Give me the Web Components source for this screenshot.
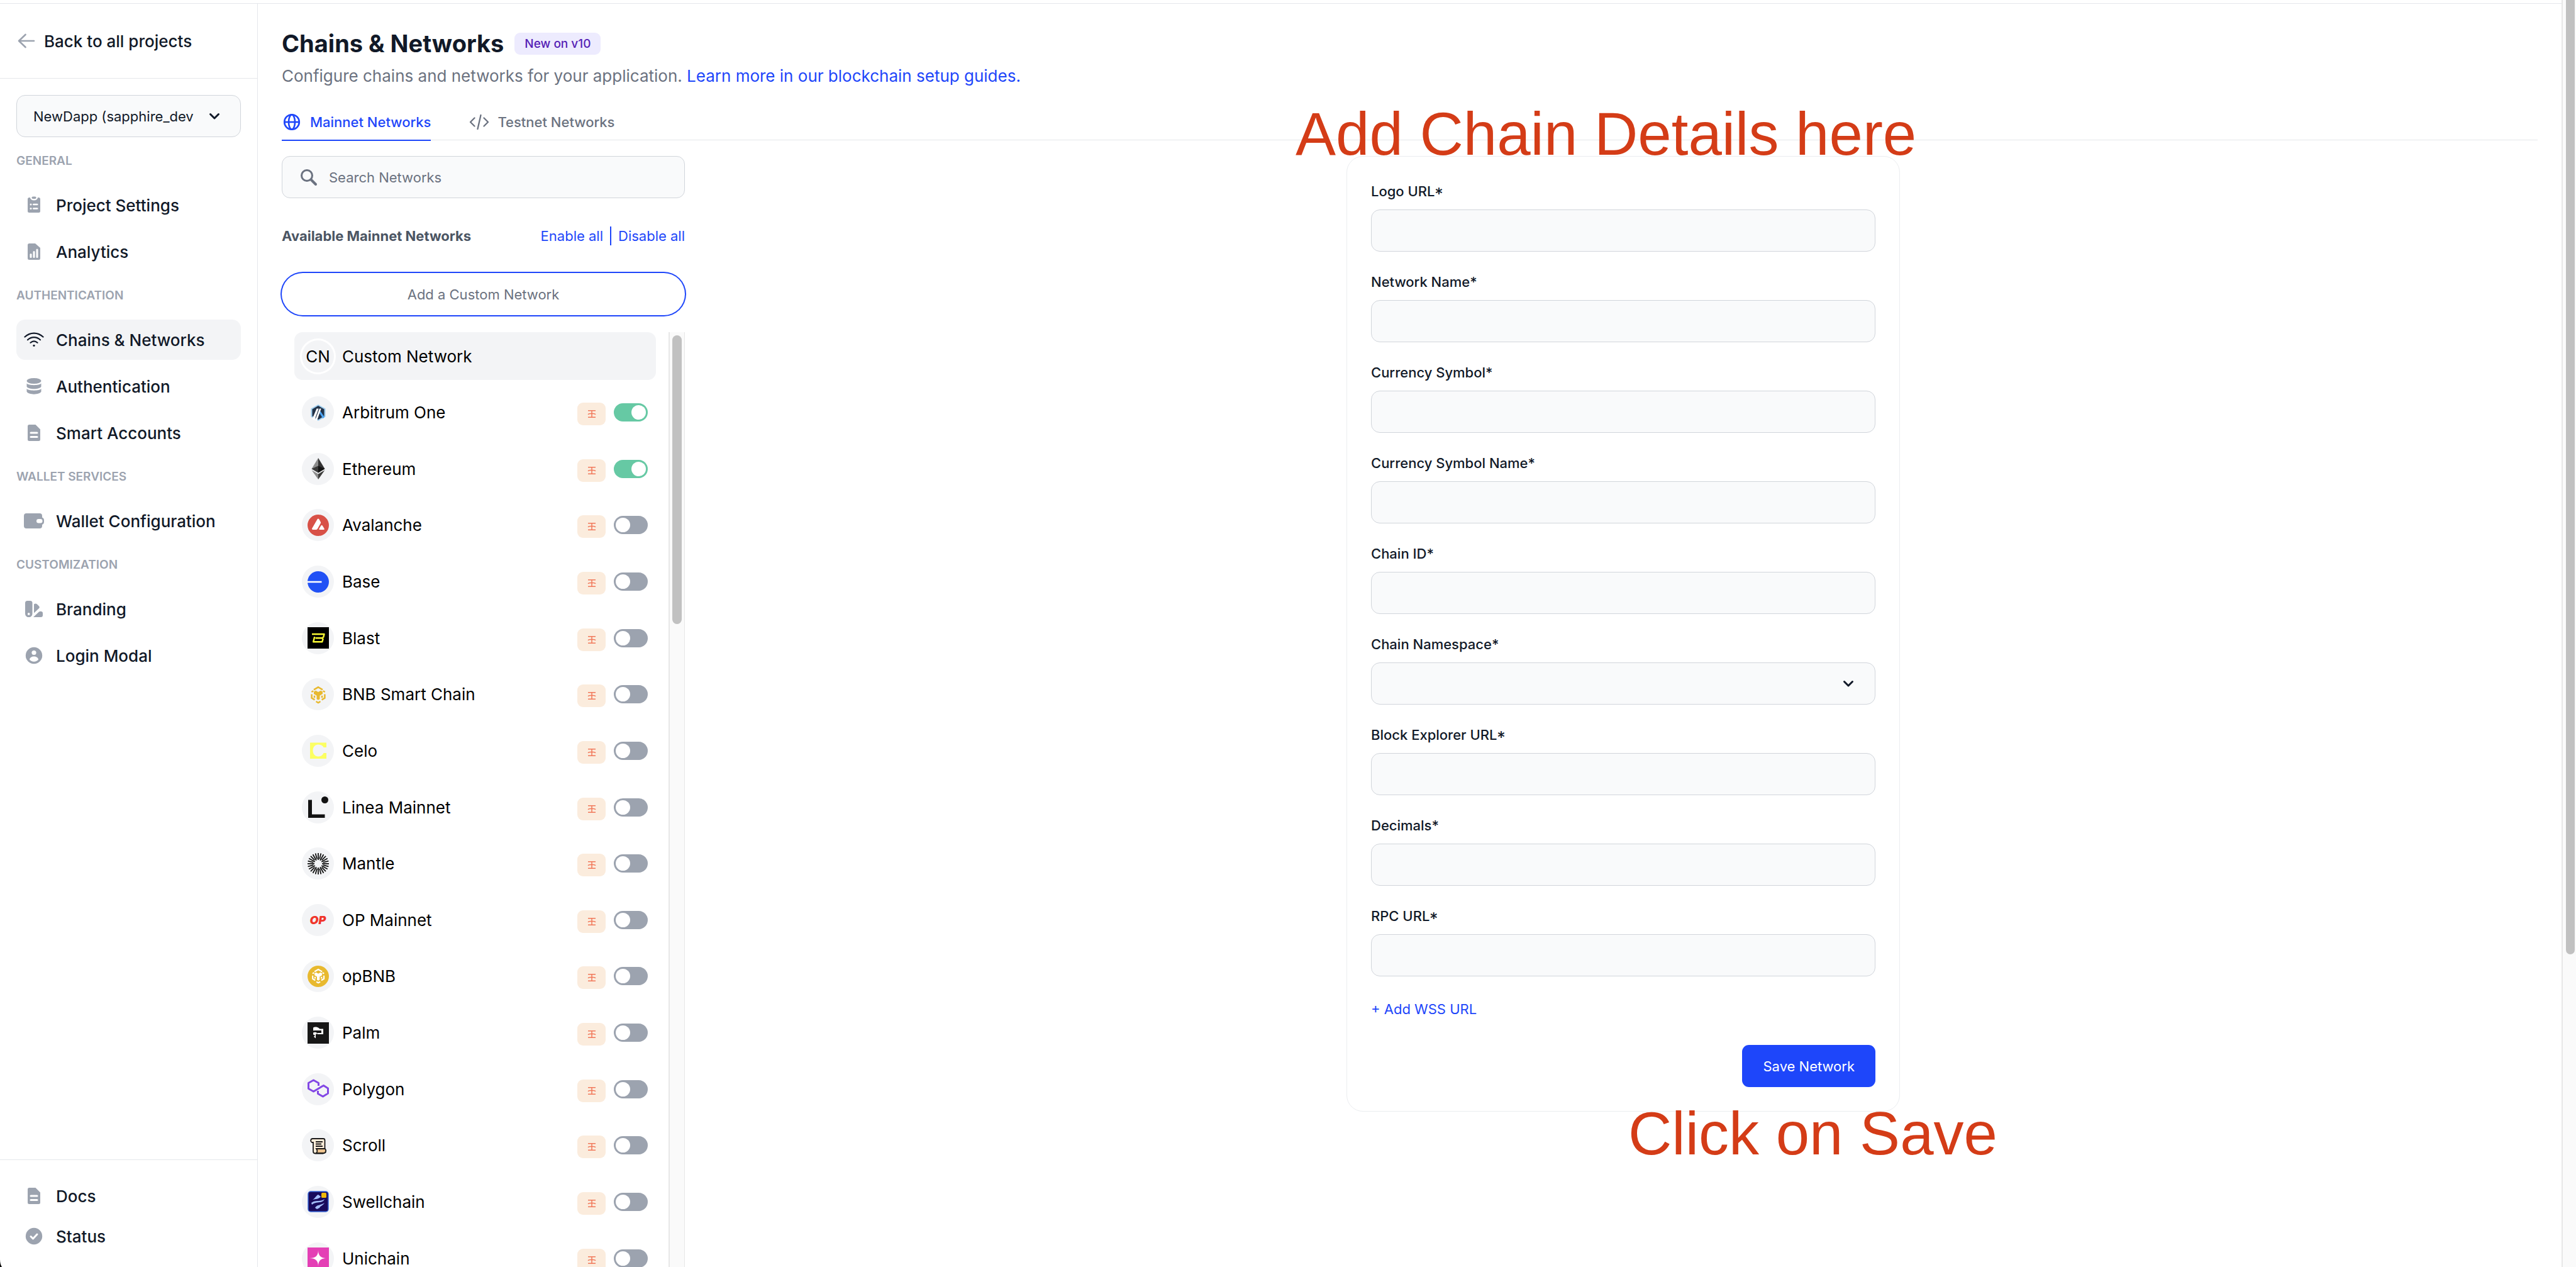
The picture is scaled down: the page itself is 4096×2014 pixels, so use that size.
<!DOCTYPE html>
<html lang="en">
<head>
<meta charset="utf-8">
<title>Chains &amp; Networks</title>
<style>
  :root {
    --ink: #111928; --muted: #6b7280; --soft: #9ca3af; --line: #e5e7eb; --edge: #d1d5db;
    --field: #f9fafb; --blue: #1e46fa; --note: #d43c17;
    --fs-lg: 26px; --fs-md: 22px; --fs-sm: 19px;
  }
  html, body { height: 100%; }
  body { margin: 0; background: #fff; color: var(--ink); font-family: Inter, "Liberation Sans", sans-serif; font-size: var(--fs-lg); }
</style>
</head>
<body>
<app-shell></app-shell>
<script>
const ICONS = {
  back: `<svg width="28" height="28" viewBox="0 0 28 28" fill="none" stroke="#9ca3af" stroke-width="2.6" stroke-linecap="round" stroke-linejoin="round"><path d="M26 14H2M12.500 4L2 14l10.500 10"/></svg>`,
  chevron: `<svg width="18" height="12" viewBox="0 0 18 12" fill="none" stroke="#111928" stroke-width="3" stroke-linecap="round" stroke-linejoin="round"><path d="M2.500 2.500L9 9l6.500-6.500"/></svg>`,
  clipboard: `<svg width="20" height="28" viewBox="0 0 20 28"><path fill="currentColor" d="M2.500 2H4a6 4.500 0 0 0 12 0h1.500A2.500 2.500 0 0 1 20 4.500v19a2.500 2.500 0 0 1-2.500 2.500h-15A2.500 2.500 0 0 1 0 23.500v-19A2.500 2.500 0 0 1 2.500 2z"/><rect x="6.500" y="0.500" width="7" height="3.500" rx="1.700" fill="currentColor"/><g fill="#fff"><circle cx="5" cy="13" r="1.500"/><circle cx="5" cy="19.500" r="1.500"/><rect x="8" y="11.700" width="8.500" height="2.600" rx="1.300"/><rect x="8" y="18.200" width="8.500" height="2.600" rx="1.300"/></g></svg>`,
  chart: `<svg width="20" height="26" viewBox="0 0 20 26"><path fill="currentColor" d="M2.500 0h9.500l8 7v16.500a2.500 2.500 0 0 1-2.500 2.500h-15A2.500 2.500 0 0 1 0 23.500v-21A2.500 2.500 0 0 1 2.500 0z"/><g fill="#fff"><rect x="3.500" y="16" width="3" height="7" rx="1.500"/><rect x="8.500" y="12" width="3" height="11" rx="1.500"/><rect x="13.500" y="8.500" width="3" height="14.500" rx="1.500"/></g></svg>`,
  doc: `<svg width="20" height="26" viewBox="0 0 20 26"><path fill="currentColor" d="M2.500 0h10l7.500 7.500v16a2.500 2.500 0 0 1-2.500 2.500h-15A2.500 2.500 0 0 1 0 23.500v-21A2.500 2.500 0 0 1 2.500 0z"/><g fill="#fff"><rect x="3.500" y="11.500" width="13" height="3" rx="1.500"/><rect x="3.500" y="18" width="13" height="3" rx="1.500"/></g></svg>`,
  wifi: `<svg width="32" height="24" viewBox="0 0 32 24" fill="none" stroke="currentColor" stroke-width="2.200" stroke-linecap="round"><path d="M1.500 7.500C10-.3 22-.3 30.500 7.500M6 12.200c6-5.400 14-5.400 20 0M10.500 16.800c3.400-3 7.600-3 11 0"/><circle cx="16" cy="21.300" r="1.600" fill="currentColor" stroke="none"/></svg>`,
  stack: `<svg width="24" height="26" viewBox="0 0 24 26" fill="currentColor"><ellipse cx="12" cy="4.500" rx="11.500" ry="4.500"/><path d="M.5 8.500C3 12 21 12 23.500 8.500v5C21 18.500 3 18.500.5 13.500z"/><path d="M.5 17C3 20.500 21 20.500 23.500 17v4.500C21 27 3 27 .5 21.500z"/></svg>`,
  wallet: `<svg width="32" height="24" viewBox="0 0 32 24"><path fill="currentColor" d="M4 0h21a4 4 0 0 1 4 4v2.500c2 .5 3 2.500 3 4.500v2.500c0 2-1 4-3 4.500V20a4 4 0 0 1-4 4H4a4 4 0 0 1-4-4V4a4 4 0 0 1 4-4z"/><rect x="20" y="9" width="9.500" height="6.500" rx="3.200" fill="#fff"/></svg>`,
  swatch: `<svg width="28" height="26" viewBox="0 0 28 26"><path fill="currentColor" fill-rule="evenodd" d="M3.500 0h4.500a3.500 3.500 0 0 1 3.500 3.500v17a5.500 5.500 0 0 1-11.500 0v-17A3.500 3.500 0 0 1 3.500 0zM5.700 19a1.900 1.900 0 1 0 0 3.800 1.900 1.900 0 0 0 0-3.800z"/><path fill="currentColor" d="M14 5.500c1.500-1.500 3.500-1.500 5 0l3 3c1.200 1.200 1 2.500 0 3.500L14 19.500zM13 26l9-8.500c2-1.500 6-1.200 6 2V23a3 3 0 0 1-3 3z"/></svg>`,
  user: `<svg width="28" height="28" viewBox="0 0 28 28"><circle cx="14" cy="14" r="13.200" fill="currentColor"/><circle cx="14" cy="9.500" r="3.600" fill="#fff"/><path fill="#fff" d="M7 20.500c0-3 3.500-5 7-5s7 2 7 5c-1.500 2-4 3.200-7 3.200s-5.500-1.200-7-3.200z"/></svg>`,
  check: `<svg width="28" height="28" viewBox="0 0 28 28"><circle cx="14" cy="14" r="13.200" fill="currentColor"/><path d="M9 14.500l3.500 3.500L19 11" fill="none" stroke="#fff" stroke-width="3" stroke-linecap="round" stroke-linejoin="round"/></svg>`,
  globe: `<svg width="28" height="28" viewBox="0 0 28 28" fill="none" stroke="currentColor" stroke-width="2.600"><circle cx="14" cy="14" r="11.800"/><ellipse cx="14" cy="14" rx="5" ry="11.800"/><path d="M2 14h24"/></svg>`,
  code: `<svg width="32" height="26" viewBox="0 0 32 26" fill="none" stroke="currentColor" stroke-width="2.300" stroke-linecap="round" stroke-linejoin="round"><path d="M8.500 6.500L2 13l6.500 6.500M23.500 6.500L30 13l-6.500 6.500M18.500 2l-5 22"/></svg>`,
  search: `<svg width="28" height="28" viewBox="0 0 28 28" fill="none" stroke="#6b7280" stroke-width="3"><circle cx="11" cy="11" r="8.500"/><path stroke-width="4" stroke-linecap="round" d="M17.500 17.500L25 25"/></svg>`,
  tag: `<svg width="14" height="14" viewBox="0 0 14 14" fill="none" stroke="#f1785a" stroke-width="1.500"><path d="M1 1.700h12M1 12.300h12M7 1.700v10.600M1 7.700C3 5.700 11 5.700 13 7.700"/></svg>`
};

const bnbMark = c => `<g fill="none" stroke="${c}" stroke-width="2.500"><path d="M10 9.300L17 5.300l7 4M6.600 16.500v6l4.800 2.800M27.400 16.500v6l-4.800 2.800M6.300 13l3-1.800M27.700 13l-3-1.800M11 18.800v3.400M23 18.800v3.400M13.500 28l3.500 2 3.500-2"/></g><path fill="${c}" d="M10 12.500l3-1.800 4 2.300 4-2.300 3 1.800V16l-4.500 2.700v5.600L17 25.800l-2.500-1.500v-5.600L10 16z"/>`;
const rays = Array.from({length: 24}, (_, i) => `<path d="M17 0V${i % 2 ? 9 : 11}" transform="rotate(${i * 15} 17 17)"/>`).join('');
const LOGOS = {
  arbitrum: `<path fill="#9dcced" d="M17 4l11.500 6.500v13L17 30 5.500 23.500v-13z"/><path fill="#213147" d="M17 6l9.500 5.500v11L17 28 7.500 22.500v-11z"/><path fill="#4ba5f5" d="M20 14l7 10-2.500 2.200L18.500 17z"/><path fill="#fff" d="M14.500 10.500h3.200L11 29l-3.500-2zM19 10.500h2.700L15 29.500l-3-.5z"/>`,
  ethereum: `<path fill="#343434" d="M17 0l10.500 17.300L17 23.500z"/><path fill="#8c8c8c" d="M17 0L6.500 17.300 17 23.500z"/><path fill="#141414" d="M17 12.500l10.500 4.800L17 23.500z"/><path fill="#393939" d="M17 12.500L6.500 17.300 17 23.500z"/><path fill="#3c3c3b" d="M17 25.500l10.500-6.200L17 34z"/><path fill="#8c8c8c" d="M17 25.500L6.500 19.300 17 34z"/>`,
  avalanche: `<circle cx="17" cy="17" r="17" fill="#d85147"/><path fill="#fff" d="M15.500 7.500c.8-1.300 2.200-1.300 3 0l2.200 4c.5 1 .5 1.700 0 2.600l-4.800 8.500c-.5.900-1.100 1.300-2.100 1.300H8.500c-1.400 0-1.900-.9-1.200-2.100zM21.500 17.500c.6-1 1.600-1 2.200 0l2.900 4.700c.6 1 .1 1.700-1 1.700h-6c-1.100 0-1.600-.7-1-1.700z"/>`,
  base: `<circle cx="17" cy="17" r="17" fill="#2151f5"/><path fill="#fff" d="M0 15.700h22.500v2.600H0z"/>`,
  blast: `<path d="M0 0h34v34H0z"/><path fill="none" stroke="#fcfc35" stroke-width="2.400" stroke-linejoin="round" d="M7 11h19.500l-1.200 4.800-2.500 1.400 1.800 1.700-1.300 4.300H9.200l2-8M12.500 17.200h10"/>`,
  bnb: bnbMark('#e8b92f'),
  celo: `<path fill="#fcff62" fill-rule="evenodd" d="M4 4.500h26v7.500h-4.500c-1-2.500-4-4.500-8.500-4.500-5 0-8.500 4-8.500 9.500s3.500 9.500 8.500 9.500c4.500 0 7-2 8.500-5.500H30v9H4z"/>`,
  linea: `<path fill="#121212" d="M1 5.500h6v23h20.500V34H1z"/><circle cx="27.500" cy="5.500" r="5.500" fill="#121212"/>`,
  mantle: `<g stroke="#111" stroke-width="1.800">${rays}</g>`,
  opbnb: `<circle cx="17" cy="17" r="17" fill="#e8b92f"/><g transform="translate(2.500 1.500) scale(.86)">${bnbMark('#fff')}</g>`,
  palm: `<path fill="#171717" d="M0 0h34v34H0z"/><path fill="#fff" d="M9 8.500c1.500-1.500 6-1.500 8 0l2.500 2H25v8.500h-9.500v-2H22v-4H13c-1.500 0-3 .5-4 0zM9 16.500c2-1 5-1 6.500 1l-2.500 2v6L10 23l2-2.500L9 19.500z"/>`,
  polygon: `<g fill="none" stroke="#8247e5" stroke-width="3" stroke-linejoin="round"><path d="M17.500 12V7.500L9.500 3l-8 4.500v9L9.500 21l16-9.500 7 4.500v8L24.500 29l-8-4.500V20"/></g>`,
  scroll: `<path fill="#ffeeda" stroke="#1a1a1a" stroke-width="1.800" d="M8 6h17c1.500 0 2.500 1 2.500 2.500V21l1 7-4 1.500H12c-2 0-3-1.500-3-3.500V12H7c-3-1.500-2-6 1-6z"/><path fill="#ebc28e" stroke="#1a1a1a" stroke-width="1.800" d="M14 22h13c3 1 3 6-1 7H13c3-1 3-4 1-7z"/><path stroke="#1a1a1a" stroke-width="1.800" d="M13 11h11M13 14.500h9M13 18h11"/>`,
  swellchain: `<rect x="1" y="1" width="32" height="32" rx="4" fill="#190a5c" stroke="#3867d6" stroke-width="1.500"/><path fill="#a4bdfa" d="M8 14c3-1 6-7 9-8l4 3c-2 4-9 4-13 5zM6 19c6-5 14-1 21-6-3 8-13 3-20 9zM12 27c2-5 9-4 15-8-2 4-7 5-8 8l-4 2z"/><rect x="22" y="3" width="8" height="8" rx="1.500" fill="#f0b90b"/>`,
  unichain: `<path fill="#e43fb5" d="M0 0h34v34H0z"/><path fill="#fff" d="M17 4c0 9 4 13 14 13-10 0-14 4-14 13 0-9-4-13-14-13 10 0 14-4 14-13z"/>`
};

function define(name, render) {
  customElements.define(name, class extends HTMLElement {
    connectedCallback() {
      if (this.shadowRoot) return;
      const t = document.createElement('template');
      t.innerHTML = '<style>*{box-sizing:border-box}svg{display:block;flex:none}</style>' + render(this);
      this.attachShadow({ mode: 'open' }).append(t.content.cloneNode(true));
    }
  });
}

define('ui-icon', el => `
  <style>:host{display:grid;place-items:center;flex:none}</style>${ICONS[el.getAttribute('name')]}`);

define('nav-item', el => `
  <style>
    :host{display:block}
    a{display:flex;align-items:center;gap:19px;height:64px;padding:0 12px;border-radius:14px;color:var(--ink);text-decoration:none;font-size:var(--fs-lg);font-weight:500}
    ui-icon{width:32px;color:var(--soft)}
    :host([active]) a{background:#f3f4f6}
    :host([active]) ui-icon{color:var(--ink)}
  </style>
  <a href="#"><ui-icon name="${el.getAttribute('icon')}"></ui-icon><slot></slot></a>`);

define('nav-group', el => `
  <style>
    :host{display:block}
    h2{margin:0;padding:24px 0;font-size:var(--fs-sm);line-height:28px;font-weight:600;color:var(--soft)}
    div{display:flex;flex-direction:column;gap:10px}
  </style>
  <h2>${el.getAttribute('label')}</h2><div><slot></slot></div>`);

define('project-select', () => `
  <style>
    :host{display:grid;align-items:center}
    select,ui-icon{grid-area:1/1}
    select{appearance:none;width:100%;height:67px;padding:0 60px 0 26px;border:1px solid var(--edge);border-radius:14px;background:var(--field);color:var(--ink);font:400 var(--fs-md) Inter,sans-serif}
    ui-icon{justify-self:end;margin-right:33px;pointer-events:none}
  </style>
  <select aria-label="Project"><option>NewDapp (sapphire_dev</option></select><ui-icon name="chevron"></ui-icon>`);

define('side-nav', () => `
  <style>
    :host{display:flex;flex-direction:column;width:410px;flex:none;border-right:1px solid var(--line)}
    .back{display:flex;align-items:center;gap:14px;height:119px;padding:0 28px;border-bottom:1px solid var(--line);color:var(--ink);text-decoration:none;font-weight:500}
    nav{flex:1;padding:26px 26px 0}
    footer{padding:25px 26px 17px;border-top:1px solid var(--line)}
  </style>
  <a class="back" href="#"><ui-icon name="back"></ui-icon>Back to all projects</a>
  <nav>
    <project-select></project-select>
    <nav-group label="GENERAL"><nav-item icon="clipboard">Project Settings</nav-item><nav-item icon="chart">Analytics</nav-item></nav-group>
    <nav-group label="AUTHENTICATION"><nav-item icon="wifi" active>Chains &amp; Networks</nav-item><nav-item icon="stack">Authentication</nav-item><nav-item icon="doc">Smart Accounts</nav-item></nav-group>
    <nav-group label="WALLET SERVICES"><nav-item icon="wallet">Wallet Configuration</nav-item></nav-group>
    <nav-group label="CUSTOMIZATION"><nav-item icon="swatch">Branding</nav-item><nav-item icon="user">Login Modal</nav-item></nav-group>
  </nav>
  <footer><nav-item icon="doc">Docs</nav-item><nav-item icon="check">Status</nav-item></footer>`);

define('page-header', () => `
  <style>
    :host{display:block}
    .title{display:flex;align-items:center;gap:17px;height:46px}
    h1{margin:0;font-size:38px;line-height:46px;font-weight:700}
    .badge{padding:0 16px;border-radius:9px;background:#edebfe;color:#5521b5;font-size:var(--fs-sm);line-height:35px;font-weight:500}
    p{margin:10px 0 0;line-height:38px;color:var(--muted)}
    a{color:var(--blue);text-decoration:none}
  </style>
  <div class="title"><h1>Chains &amp; Networks</h1><span class="badge">New on v10</span></div>
  <p>Configure chains and networks for your application. <a href="#">Learn more in our blockchain setup guides.</a></p>`);

define('tab-item', el => `
  <style>
    :host{display:block}
    button{display:flex;align-items:center;gap:13px;height:64px;padding:5px 0 0;border:0;border-bottom:2px solid transparent;background:none;color:var(--muted);font:500 var(--fs-md) Inter,sans-serif}
    ui-icon{width:32px}
    :host([active]) button{color:var(--blue);border-color:var(--blue)}
  </style>
  <button type="button" role="tab"><ui-icon name="${el.getAttribute('icon')}"></ui-icon><slot></slot></button>`);

define('tab-bar', () => `
  <style>:host{display:flex;gap:61px;height:63px;border-bottom:1px solid var(--line)}</style><slot></slot>`);

define('toggle-switch', el => `
  <style>
    :host{display:block}
    input{appearance:none;display:block;position:relative;width:54px;height:29px;margin:0;border-radius:15px;background:var(--soft)}
    input::before{content:"";position:absolute;left:3px;top:3px;width:23px;height:23px;border-radius:50%;background:#fff}
    input:checked{background:#66c9a4}
    input:checked::before{left:28px}
  </style>
  <input type="checkbox" role="switch" aria-label="${el.getAttribute('label')}" ${el.hasAttribute('on') ? 'checked' : ''}>`);

define('chain-logo', el => {
  const n = el.getAttribute('name');
  const inner = n === 'cn' ? 'CN' : n === 'op' ? '<b>OP</b>' : `<svg width="34" height="34" viewBox="0 0 34 34">${LOGOS[n]}</svg>`;
  return `
  <style>
    :host{display:grid;place-items:center;width:51px;height:51px;border-radius:50%;background:#f3f4f6;flex:none;color:#000}
    :host([name=cn]){box-shadow:0 0 0 3px #fff}
    b{color:#f0352b;font:italic 900 18px Inter,sans-serif}
  </style>${inner}`;
});

define('network-row', el => {
  const n = el.getAttribute('logo'), custom = n === 'cn';
  return `
  <style>
    :host{display:flex;align-items:center;height:76px;flex:none;padding:0 13px 0 12px;border-radius:13px;color:#000}
    :host([logo=cn]){background:#f3f4f6}
    .name{flex:1;padding-left:13px}
    .tag{width:45px;height:36px;border-radius:9px;background:#fbecdd;margin:5px 13px 0 0}
  </style>
  <chain-logo name="${n}"></chain-logo><span class="name"><slot></slot></span>
  ${custom ? '' : `<ui-icon class="tag" name="tag"></ui-icon><toggle-switch label="${el.textContent}" ${el.hasAttribute('on') ? 'on' : ''}></toggle-switch>`}`;
});

define('scroll-rail', () => `
  <style>
    :host{display:block;width:26px;flex:none;padding:5px 4px 0 4px;border:solid #e7e7e7;border-width:0 1px 0 2px;background:#fafafa}
    div{width:15px;height:31%;border-radius:8px;background:#c1c1c1}
  </style><div></div>`);

define('network-panel', () => {
  const rows = [['cn','Custom Network'],['arbitrum','Arbitrum One',1],['ethereum','Ethereum',1],['avalanche','Avalanche'],['base','Base'],['blast','Blast'],['bnb','BNB Smart Chain'],['celo','Celo'],['linea','Linea Mainnet'],['mantle','Mantle'],['op','OP Mainnet'],['opbnb','opBNB'],['palm','Palm'],['polygon','Polygon'],['scroll','Scroll'],['swellchain','Swellchain'],['unichain','Unichain']];
  return `
  <style>
    :host{display:flex;flex-direction:column;width:641px;flex:none;min-height:0}
    .search{display:grid;align-items:center}
    .search>*{grid-area:1/1}
    .search ui-icon{justify-self:start;margin-left:29px;pointer-events:none}
    input{width:100%;height:67px;padding:0 26px 0 74px;border:1px solid var(--edge);border-radius:13px;background:var(--field);font:400 var(--fs-md) Inter,sans-serif}
    input::placeholder{color:var(--muted);opacity:1}
    .head{display:flex;justify-content:space-between;align-items:center;height:36px;margin:42px 0 41px;font-size:var(--fs-md)}
    h2{margin:0;font-size:var(--fs-md);font-weight:700;color:#4b5563}
    .links{display:flex;align-items:center;gap:11px;height:30px}
    .links i{width:2px;height:30px;background:var(--blue)}
    a{color:var(--blue);text-decoration:none}
    .add{width:100%;height:67px;flex:none;border:0;border-radius:34px;background:#fff;box-shadow:0 0 0 2px var(--blue);color:var(--muted);font:400 var(--fs-md) Inter,sans-serif}
    .list{display:flex;flex:1;min-height:0;margin-top:27px}
    .rows{display:flex;flex-direction:column;justify-content:space-between;flex:1;height:calc(100% + 24px);padding:0 20px}
  </style>
  <label class="search"><input type="search" aria-label="Search Networks" placeholder="Search Networks"><ui-icon name="search"></ui-icon></label>
  <div class="head"><h2>Available Mainnet Networks</h2><span class="links"><a href="#">Enable all</a><i></i><a href="#">Disable all</a></span></div>
  <button class="add" type="button">Add a Custom Network</button>
  <div class="list"><div class="rows">${rows.map(r => `<network-row logo="${r[0]}" ${r[2] ? 'on' : ''}>${r[1]}</network-row>`).join('')}</div><scroll-rail></scroll-rail></div>`;
});

define('form-field', el => `
  <style>
    :host{display:block}
    label{display:block;margin-bottom:12px;font-size:var(--fs-md);line-height:34px;font-weight:500}
    .caps{font-feature-settings:"case"}
    .box{display:grid;align-items:center}
    .box>*{grid-area:1/1}
    input,select{appearance:none;display:block;width:100%;height:67px;padding:0 26px;border:1px solid var(--edge);border-radius:14px;background:var(--field);color:var(--ink);font:400 var(--fs-md) Inter,sans-serif}
    ui-icon{justify-self:end;margin-right:34px;pointer-events:none}
  </style>
  <label for="f" class="${/URL$/.test(el.getAttribute('label')) ? 'caps' : ''}">${el.getAttribute('label')}*</label>
  <div class="box">${el.hasAttribute('select') ? '<select id="f"><option></option></select><ui-icon name="chevron"></ui-icon>' : '<input id="f" type="text">'}</div>`);

define('call-out', () => `
  <style>:host{position:absolute;white-space:nowrap;font:400 96px/96px "Liberation Sans",Arial,sans-serif;color:var(--note)}</style><slot></slot>`);

define('network-form', () => `
  <style>
    :host{display:block;position:relative;width:880px;padding:38px;border:1px solid #ebedf0;border-radius:26px}
    form{display:flex;flex-direction:column;gap:31px}
    .wss{font-size:var(--fs-md);line-height:34px;margin-top:4px;color:var(--blue);text-decoration:none;align-self:flex-start}
    button{align-self:flex-end;height:67px;margin-top:9px;padding:0 33px;border:0;border-radius:11px;background:var(--blue);color:#fff;font:400 var(--fs-md) Inter,sans-serif}
    .top{left:-82px;top:-84px}
    .bottom{left:447px;top:1505px}
  </style>
  <form>
    ${['Logo URL','Network Name','Currency Symbol','Currency Symbol Name','Chain ID','Chain Namespace','Block Explorer URL','Decimals','RPC URL'].map(l => `<form-field label="${l}" ${l === 'Chain Namespace' ? 'select' : ''}></form-field>`).join('')}
    <a class="wss" href="#">+ Add WSS URL</a>
    <button type="button">Save Network</button>
  </form>
  <call-out class="top">Add Chain Details here</call-out>
  <call-out class="bottom">Click on Save</call-out>`);

define('page-scrollbar', () => `
  <style>
    :host{display:block;width:23px;flex:none;padding:0 2px 0 5px;border-left:2px solid #e7e7e7;background:#fafafa}
    div{width:14px;height:75.3%;border-radius:0 0 7px 7px;background:#c1c1c1}
  </style><div></div>`);

define('app-shell', () => `
  <style>
    :host{display:flex;height:100vh;overflow:hidden;position:relative}
    .app{display:flex;flex-direction:column;flex:1;min-width:0}
    .strip{height:6px;flex:none;border-bottom:1px solid var(--line)}
    .body{display:flex;flex:1;min-height:0}
    main{display:flex;flex-direction:column;flex:1;min-width:0;padding:40px 38px 0}
    tab-bar{margin-top:20px;flex:none}
    .cols{display:flex;flex:1;min-height:0;gap:38px;padding-top:25px}
    .form{flex:1;display:flex;justify-content:center;align-items:flex-start}
    .corner{position:absolute;left:0;bottom:0}
  </style>
  <div class="app">
    <div class="strip"></div>
    <div class="body">
      <side-nav></side-nav>
      <main>
        <page-header></page-header>
        <tab-bar role="tablist"><tab-item icon="globe" active>Mainnet Networks</tab-item><tab-item icon="code">Testnet Networks</tab-item></tab-bar>
        <div class="cols"><network-panel></network-panel><div class="form"><network-form></network-form></div></div>
      </main>
    </div>
  </div>
  <page-scrollbar></page-scrollbar>
  <svg class="corner" width="3" height="12" viewBox="0 0 3 12"><path d="M0 0c0 5 1 9 3 12H0z"/></svg>`);
</script>
</body>
</html>
